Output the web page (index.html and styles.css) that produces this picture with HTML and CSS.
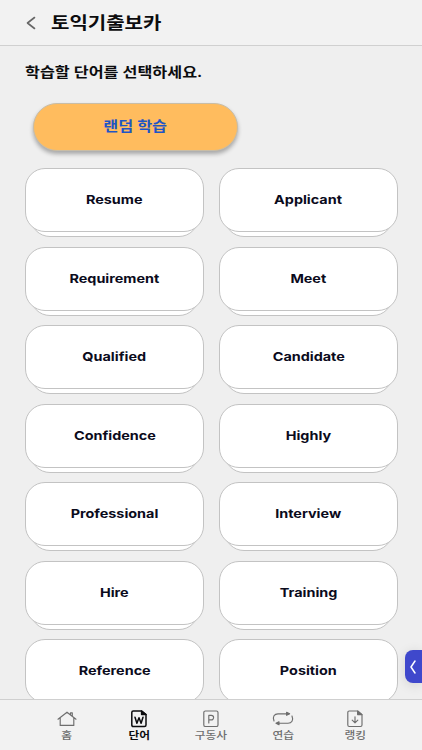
FILE: index.html
```html
<!DOCTYPE html>
<html lang="ko">
<head>
<meta charset="UTF-8">
<meta name="viewport" content="width=device-width, initial-scale=1.0">
<title>토익기출보카</title>
<link rel="stylesheet" href="styles.css">
</head>
<body>
<div class="app">
<header class="header">
<svg class="back" viewBox="0 0 10 14"><path d="M8.5 1.5L1.5 7L8.5 12.5"/></svg>
<h1><span class="wide left">토익기출보카</span></h1>
</header>

<main class="content">
<p class="guide"><span class="wide left">학습할 단어를 선택하세요.</span></p>
<button class="random"><span class="wide">랜덤 학습</span></button>
<div class="words">
<div class="card"><span class="wide">Resume</span></div>
<div class="card"><span class="wide">Applicant</span></div>
<div class="card"><span class="wide">Requirement</span></div>
<div class="card"><span class="wide">Meet</span></div>
<div class="card"><span class="wide">Qualified</span></div>
<div class="card"><span class="wide">Candidate</span></div>
<div class="card"><span class="wide">Confidence</span></div>
<div class="card"><span class="wide">Highly</span></div>
<div class="card"><span class="wide">Professional</span></div>
<div class="card"><span class="wide">Interview</span></div>
<div class="card"><span class="wide">Hire</span></div>
<div class="card"><span class="wide">Training</span></div>
<div class="card"><span class="wide">Reference</span></div>
<div class="card"><span class="wide">Position</span></div>
</div>
</main>

<div class="drawer"><svg viewBox="0 0 6 14"><path d="M5 1L1 7L5 13"/></svg></div>

<nav class="tabs">
<a class="tab">
<svg viewBox="0 0 22 18"><path d="M2 9.2L11 2.2L20 9.2M4.2 8V15.4H17.8V8M14.5 4.6V2.8H16.3V6"/></svg>
<span class="wide">홈</span>
</a>
<a class="tab active">
<svg viewBox="0 0 22 18"><path d="M5.3 1H13.6L18 4.6V15Q18 16.5 16.5 16.5H5.3Q3.8 16.5 3.8 15V2.5Q3.8 1 5.3 1Z"/><path class="fill" d="M13.6 1V4.6H18Z"/><path d="M7 7.3L8.9 13.3L11 7.8L13.1 13.3L15 7.3"/></svg>
<span class="wide">단어</span>
</a>
<a class="tab">
<svg viewBox="0 0 22 18"><rect x="3.8" y="1" width="14.2" height="15.5" rx="1.6"/><path d="M8.8 13V5.3H11.3A2.3 2.3 0 0 1 11.3 9.9H8.8"/></svg>
<span class="wide">구동사</span>
</a>
<a class="tab">
<svg viewBox="0 0 22 18"><path d="M2 11C.2 6.5 2.4 3.8 6 3.8H17M20 6C21.8 10.5 19.6 13.2 16 13.2H5"/><path class="fill" d="M14.6 2.3L17.6 3.8L14.6 5.3ZM7 11.7L4 13.2L7 14.7Z"/></svg>
<span class="wide">연습</span>
</a>
<a class="tab">
<svg viewBox="0 0 22 18"><path d="M5.3 1H13.6L18 4.6V15Q18 16.5 16.5 16.5H5.3Q3.8 16.5 3.8 15V2.5Q3.8 1 5.3 1Z"/><path class="fill" d="M13.6 1V4.6H18Z"/><path d="M11 6.8V12.8M8.2 10.2L11 12.8L13.8 10.2"/></svg>
<span class="wide">랭킹</span>
</a>
</nav>
</div>
</body>
</html>
```
FILE: styles.css
```css
* {
box-sizing: border-box;
}
body {
margin: 0;
background-color: #efefef;
font-family: "Inter", "Noto Sans CJK KR", sans-serif;
color: #0c0c0e;
}
svg {
fill: none;
stroke: currentColor;
stroke-linecap: round;
stroke-linejoin: round;
}
.fill {
fill: currentColor;
}
.app {
position: relative;
display: flex;
flex-direction: column;
height: 750px;
overflow: hidden;
}
/* extended letterforms */
.wide {
display: inline-block;
transform: scaleX(1.17);
}
.wide.left {
transform-origin: left;
}
.header {
flex: none;
display: flex;
align-items: center;
height: 46px;
padding-left: 26px;
background-color: #f2f2f2;
border-bottom: 1px solid #d0d0d0;
}
.back {
width: 10px;
height: 14px;
margin-right: 15px;
color: #666;
stroke-width: 1.6;
}
h1 {
margin: 0;
padding-top: 1px;
font-size: 17.1px;
line-height: 24px;
font-weight: 700;
}
.content {
flex: 1;
min-height: 0;
overflow: hidden;
padding: 15px 24px 0 25px;
}
.guide {
margin: 0;
font-size: 13.85px;
line-height: 22px;
font-weight: 600;
}
.random {
display: block;
width: 205px;
height: 48px;
margin: 20px 0 17px 8px;
padding: 0 0 4px;
border: 1px solid #c9bda6;
border-radius: 24px;
background-color: #ffbc5e;
box-shadow: 0 3px 4px rgba(0, 0, 0, 0.3);
color: #1f55c4;
font-family: inherit;
font-size: 13.9px;
font-weight: 700;
}
.words {
isolation: isolate;
display: grid;
grid-template-columns: repeat(2, 179px);
grid-auto-rows: 64px;
gap: 14.5px 15px;
}
.card {
position: relative;
display: flex;
align-items: center;
justify-content: center;
padding-bottom: 1px;
border: 1px solid #c3c3c3;
border-radius: 20px;
background-color: #fff;
color: #0b0b1c;
font-size: 12.3px;
font-weight: 700;
}
/* second sheet peeking out under the card */
.card::before {
content: "";
position: absolute;
z-index: -1;
left: 4px;
right: 4px;
top: 8px;
bottom: -6px;
border: 1px solid #c3c3c3;
border-radius: 20px;
background-color: #fff;
}
.drawer {
position: absolute;
right: 0;
top: 650px;
display: flex;
align-items: center;
width: 17px;
height: 33px;
padding-left: 5px;
border-radius: 8px 0 0 8px;
background-color: #3f48cc;
box-shadow: 0 2px 12px rgba(0, 0, 0, 0.12);
color: #fff;
}
.drawer svg {
width: 6px;
height: 14px;
stroke-width: 1.5;
}
.tabs {
flex: none;
position: relative;
display: grid;
grid-template-columns: repeat(5, 72px);
justify-content: center;
height: 51px;
padding-top: 10px;
background-color: #f2f2f2;
border-top: 1px solid #cfcfcf;
}
.tab {
display: flex;
flex-direction: column;
align-items: center;
color: #6e6e6e;
font-size: 10px;
line-height: 15px;
font-weight: 500;
}
.tab svg {
width: 22px;
height: 18px;
stroke-width: 1.15;
}
.tab.active {
color: #0c0c0e;
font-weight: 700;
}
.tab.active svg {
stroke-width: 1.5;
}
```
